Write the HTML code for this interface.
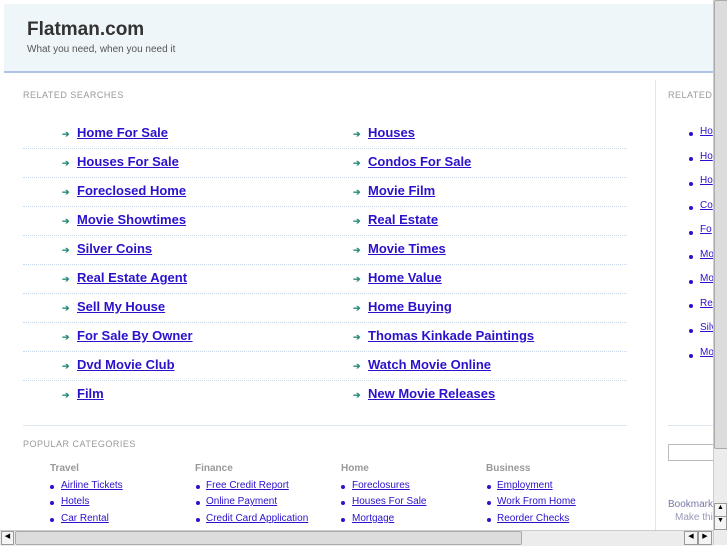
<!DOCTYPE html><html><head><style>
*{margin:0;padding:0}
body{width:727px;height:545px;overflow:hidden;position:relative;background:#fff;font-family:"Liberation Sans",sans-serif}
.a{position:absolute;white-space:nowrap}
.hd{left:4px;top:4px;width:709px;height:67px;background:#eff6f9;border-bottom:2px solid #aec3e6}
.t{left:27px;top:19px;font-size:19px;font-weight:bold;color:#333}
.s{left:27px;top:44px;font-size:10px;color:#555}
.lab{font-size:9px;color:#999;letter-spacing:.5px}
.lk{font-size:13px;font-weight:bold;color:#2a12cc;text-decoration:underline}
.ar{color:#2a8a7a;font-size:9px;font-weight:bold;margin-top:3px}
.dot{height:0;border-top:1px dotted #c8d8ec;width:604px;left:23px}
.ch{font-size:10px;font-weight:bold;color:#999}
.sl{font-size:10px;color:#2a12cc;text-decoration:underline}
.b{width:4px;height:4px;border-radius:2px;background:#2a12cc}
</style></head><body>
<div class="a hd"></div>
<div class="a t">Flatman.com</div>
<div class="a s">What you need, when you need it</div>
<div class="a lab" style="left:23px;top:90px">RELATED SEARCHES</div>
<div class="a" style="left:655px;top:80px;width:1px;height:465px;background:#dde6f0"></div>
<div class="a lab" style="left:668px;top:90px">RELATED</div>

<div class="a ar" style="left:62px;top:126px">➔</div><div class="a lk" style="left:77px;top:125px">Home For Sale</div>
<div class="a ar" style="left:353px;top:126px">➔</div><div class="a lk" style="left:368px;top:125px">Houses</div>
<div class="a dot" style="top:148px"></div>
<div class="a ar" style="left:62px;top:155px">➔</div><div class="a lk" style="left:77px;top:154px">Houses For Sale</div>
<div class="a ar" style="left:353px;top:155px">➔</div><div class="a lk" style="left:368px;top:154px">Condos For Sale</div>
<div class="a dot" style="top:177px"></div>
<div class="a ar" style="left:62px;top:184px">➔</div><div class="a lk" style="left:77px;top:183px">Foreclosed Home</div>
<div class="a ar" style="left:353px;top:184px">➔</div><div class="a lk" style="left:368px;top:183px">Movie Film</div>
<div class="a dot" style="top:206px"></div>
<div class="a ar" style="left:62px;top:213px">➔</div><div class="a lk" style="left:77px;top:212px">Movie Showtimes</div>
<div class="a ar" style="left:353px;top:213px">➔</div><div class="a lk" style="left:368px;top:212px">Real Estate</div>
<div class="a dot" style="top:235px"></div>
<div class="a ar" style="left:62px;top:242px">➔</div><div class="a lk" style="left:77px;top:241px">Silver Coins</div>
<div class="a ar" style="left:353px;top:242px">➔</div><div class="a lk" style="left:368px;top:241px">Movie Times</div>
<div class="a dot" style="top:264px"></div>
<div class="a ar" style="left:62px;top:271px">➔</div><div class="a lk" style="left:77px;top:270px">Real Estate Agent</div>
<div class="a ar" style="left:353px;top:271px">➔</div><div class="a lk" style="left:368px;top:270px">Home Value</div>
<div class="a dot" style="top:293px"></div>
<div class="a ar" style="left:62px;top:300px">➔</div><div class="a lk" style="left:77px;top:299px">Sell My House</div>
<div class="a ar" style="left:353px;top:300px">➔</div><div class="a lk" style="left:368px;top:299px">Home Buying</div>
<div class="a dot" style="top:322px"></div>
<div class="a ar" style="left:62px;top:329px">➔</div><div class="a lk" style="left:77px;top:328px">For Sale By Owner</div>
<div class="a ar" style="left:353px;top:329px">➔</div><div class="a lk" style="left:368px;top:328px">Thomas Kinkade Paintings</div>
<div class="a dot" style="top:351px"></div>
<div class="a ar" style="left:62px;top:358px">➔</div><div class="a lk" style="left:77px;top:357px">Dvd Movie Club</div>
<div class="a ar" style="left:353px;top:358px">➔</div><div class="a lk" style="left:368px;top:357px">Watch Movie Online</div>
<div class="a dot" style="top:380px"></div>
<div class="a ar" style="left:62px;top:387px">➔</div><div class="a lk" style="left:77px;top:386px">Film</div>
<div class="a ar" style="left:353px;top:387px">➔</div><div class="a lk" style="left:368px;top:386px">New Movie Releases</div>

<div class="a" style="left:23px;top:425px;width:604px;height:1px;background:#dde6f0"></div>
<div class="a" style="left:668px;top:425px;width:45px;height:1px;background:#dde6f0"></div>
<div class="a lab" style="left:23px;top:439px">POPULAR CATEGORIES</div>

<div class="a ch" style="left:50px;top:463px">Travel</div>
<div class="a ch" style="left:195px;top:463px">Finance</div>
<div class="a ch" style="left:341px;top:463px">Home</div>
<div class="a ch" style="left:486px;top:463px">Business</div>

<div class="a b" style="left:50px;top:485px"></div><div class="a sl" style="left:61px;top:480px">Airline Tickets</div>
<div class="a b" style="left:50px;top:501px"></div><div class="a sl" style="left:61px;top:496px">Hotels</div>
<div class="a b" style="left:50px;top:518px"></div><div class="a sl" style="left:61px;top:513px">Car Rental</div>
<div class="a b" style="left:196px;top:485px"></div><div class="a sl" style="left:206px;top:480px">Free Credit Report</div>
<div class="a b" style="left:196px;top:501px"></div><div class="a sl" style="left:206px;top:496px">Online Payment</div>
<div class="a b" style="left:196px;top:518px"></div><div class="a sl" style="left:206px;top:513px">Credit Card Application</div>
<div class="a b" style="left:341px;top:485px"></div><div class="a sl" style="left:352px;top:480px">Foreclosures</div>
<div class="a b" style="left:341px;top:501px"></div><div class="a sl" style="left:352px;top:496px">Houses For Sale</div>
<div class="a b" style="left:341px;top:518px"></div><div class="a sl" style="left:352px;top:513px">Mortgage</div>
<div class="a b" style="left:487px;top:485px"></div><div class="a sl" style="left:497px;top:480px">Employment</div>
<div class="a b" style="left:487px;top:501px"></div><div class="a sl" style="left:497px;top:496px">Work From Home</div>
<div class="a b" style="left:487px;top:518px"></div><div class="a sl" style="left:497px;top:513px">Reorder Checks</div>

<div class="a b" style="left:689px;top:132px"></div><div class="a sl" style="left:700px;top:126px">Ho</div>
<div class="a b" style="left:689px;top:157px"></div><div class="a sl" style="left:700px;top:151px">Ho</div>
<div class="a b" style="left:689px;top:182px"></div><div class="a sl" style="left:700px;top:175px">Ho</div>
<div class="a b" style="left:689px;top:206px"></div><div class="a sl" style="left:700px;top:200px">Co</div>
<div class="a b" style="left:689px;top:231px"></div><div class="a sl" style="left:700px;top:224px">Fo</div>
<div class="a b" style="left:689px;top:255px"></div><div class="a sl" style="left:700px;top:249px">Mo</div>
<div class="a b" style="left:689px;top:280px"></div><div class="a sl" style="left:700px;top:273px">Mo</div>
<div class="a b" style="left:689px;top:304px"></div><div class="a sl" style="left:700px;top:298px">Re</div>
<div class="a b" style="left:689px;top:329px"></div><div class="a sl" style="left:700px;top:322px">Silv</div>
<div class="a b" style="left:689px;top:354px"></div><div class="a sl" style="left:700px;top:347px">Mo</div>
<div class="a" style="left:668px;top:444px;width:50px;height:15px;border:1px solid #bbb"></div>
<div class="a" style="left:668px;top:499px;font-size:10px;color:#77a">Bookmark</div>
<div class="a" style="left:675px;top:512px;font-size:10px;color:#99b">Make thi</div>

<div class="a" style="left:713px;top:0;width:14px;height:545px;background:#ececec;border-left:1px solid #ccc"></div>
<div class="a" style="left:714px;top:0;width:12px;height:447px;background:#dcdcdc;border:1px solid #aaa;border-radius:2px"></div>
<div class="a" style="left:714px;top:503px;width:11px;height:12px;background:#f4f4f4;border:1px solid #999;font-size:7px;text-align:center">▲</div>
<div class="a" style="left:714px;top:516px;width:11px;height:12px;background:#f4f4f4;border:1px solid #999;font-size:7px;text-align:center">▼</div>
<div class="a" style="left:0;top:530px;width:713px;height:15px;background:#ececec;border-top:1px solid #ccc"></div>
<div class="a" style="left:1px;top:531px;width:11px;height:12px;background:#f4f4f4;border:1px solid #999;font-size:7px;text-align:center">◀</div>
<div class="a" style="left:15px;top:531px;width:505px;height:12px;background:#dcdcdc;border:1px solid #aaa;border-radius:2px"></div>
<div class="a" style="left:684px;top:531px;width:12px;height:12px;background:#f4f4f4;border:1px solid #999;font-size:7px;text-align:center">◀</div>
<div class="a" style="left:698px;top:531px;width:12px;height:12px;background:#f4f4f4;border:1px solid #999;font-size:7px;text-align:center">▶</div>
</body></html>
